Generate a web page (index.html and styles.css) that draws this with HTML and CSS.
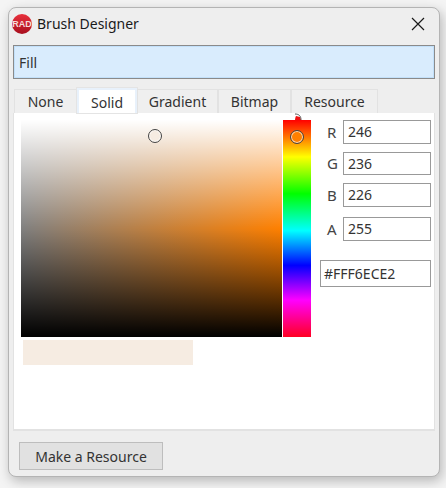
FILE: index.html
```html
<!DOCTYPE html>
<html lang="en">
<head>
    <meta charset="UTF-8">
    <meta name="viewport" content="width=device-width, initial-scale=1.0">
    <title>Brush Designer</title>
    <link rel="stylesheet" href="styles.css">
</head>
<body>
    <div class="window">
        <div class="titlebar">
            <div class="app-logo">RAD</div>
            <h1>Brush Designer</h1>
            <svg class="close-icon" width="14" height="14" viewBox="0 0 14 14">
                <path d="M1 1 L13 13 M13 1 L1 13" stroke="#1a1a1a" stroke-width="1.2" fill="none"/>
            </svg>
        </div>

        <div class="name-box"><span>Fill</span></div>

        <div class="tabs">
            <div class="tab">None</div>
            <div class="tab tab-active">Solid</div>
            <div class="tab">Gradient</div>
            <div class="tab">Bitmap</div>
            <div class="tab">Resource</div>
        </div>

        <div class="panel">
            <div class="picker">
                <div class="picker-left">
                    <div class="picker-colors">
                        <div class="sv-square">
                            <div class="handle handle-sv"></div>
                        </div>
                        <div class="hue-bar">
                            <svg class="hue-glitch" width="14" height="8" viewBox="0 0 14 8">
                                <path d="M2 7 C2 5 3 3 3 3 L7 4 L8 7 Z" fill="#ee1111"/>
                                <path d="M2 1 C6 1 8 3 8 7" stroke="#555" stroke-width="1" fill="none"/>
                            </svg>
                            <div class="handle handle-hue"></div>
                        </div>
                    </div>
                    <div class="preview"></div>
                </div>

                <div class="channels">
                    <div class="channel"><label>R</label><div class="field">246</div></div>
                    <div class="channel"><label>G</label><div class="field">236</div></div>
                    <div class="channel"><label>B</label><div class="field">226</div></div>
                    <div class="channel channel-alpha"><label>A</label><div class="field">255</div></div>
                    <div class="field field-hex">#FFF6ECE2</div>
                </div>
            </div>
        </div>

        <div class="footer">
            <button class="btn">Make a Resource</button>
        </div>
    </div>
</body>
</html>
```
FILE: styles.css
```css
* {
    margin: 0;
    padding: 0;
    box-sizing: border-box;
}

html, body {
    width: 446px;
    height: 488px;
    overflow: hidden;
}

body {
    font-family: 'Noto Sans', 'Open Sans', sans-serif;
    font-size: 14px;
    color: #333;
    background-color: #f4f4f4;
    padding: 7px 6px 11px 8px;
}

.window {
    width: 432px;
    height: 470px;
    background: #eeeeee;
    border: 1px solid #b4b4b4;
    border-radius: 8px;
    box-shadow: 2px 4px 12px rgba(0,0,0,0.25);
    padding: 0 4px 0 4px;
}

.titlebar {
    height: 31px;
    margin: 0 -4px 6px;
    display: flex;
    align-items: center;
    gap: 5px;
    padding: 0 14px 0 3px;
}

.app-logo {
    width: 20px;
    height: 20px;
    border-radius: 50%;
    background: linear-gradient(#e8303c, #a80f1e);
    color: #f4dada;
    font-family: 'Liberation Sans', sans-serif;
    font-size: 9px;
    font-weight: bold;
    line-height: 20px;
    text-align: center;
}

.titlebar h1 {
    flex: 1;
    font-size: 14px;
    font-weight: 400;
    color: #1a1a1a;
}

.name-box {
    height: 34px;
    border: 1px solid #8a8a8a;
    background: #d9ecfd;
    box-shadow: inset 0 0 0 1px #c2e0fa;
    display: flex;
    align-items: center;
    padding-left: 5px;
}

.tabs {
    display: grid;
    grid-template-columns: 63px 60px 81px 73px 87px;
    align-items: end;
    height: 34px;
    padding-left: 1px;
}

.tab {
    height: 24px;
    line-height: 23px;
    background: #efefef;
    border: 1px solid #e2e2e2;
    border-bottom: none;
    text-align: center;
}

.tab-active {
    height: 25px;
    line-height: 25px;
    background: #ffffff;
    border: 2px solid #e8f1fb;
    border-bottom: none;
    outline: 1px solid #e4e4e4;
}

.panel {
    height: 318px;
    background: #ffffff;
    border: 1px solid #e2e2e2;
    border-width: 0 1px 2px 1px;
    padding: 7px 5px 0 7px;
}

.picker {
    display: flex;
}

.picker-colors {
    display: flex;
    gap: 1px;
}

.sv-square {
    position: relative;
    width: 261px;
    height: 217px;
    background:
        linear-gradient(to bottom, #ffffff, rgba(255,255,255,0) 50%, rgba(0,0,0,0) 50%, #000000),
        linear-gradient(to right, #808080, #ff8000);
}

.hue-bar {
    position: relative;
    width: 28px;
    height: 217px;
    background: linear-gradient(to bottom, #ff0000, #ffff00 17%, #00ff00 34%, #00ffff 51%, #0000ff 67%, #ff00ff 83%, #ff0022);
}

.hue-glitch {
    position: absolute;
    top: -7px;
    left: 10px;
}

.handle {
    position: absolute;
    width: 14px;
    height: 14px;
    border-radius: 50%;
    border: 1.5px solid #444;
    box-shadow: inset 0 0 0 1px rgba(255,255,255,0.7);
}

.handle-sv {
    left: 127px;
    top: 9px;
    background: #f6ece2;
}

.handle-hue {
    left: 7px;
    top: 10px;
    background: #ff8000;
}

.preview {
    width: 170px;
    height: 25px;
    margin: 3px 0 0 2px;
    background: #f6ece2;
}

.channels {
    width: 120px;
    padding-left: 9px;
    display: flex;
    flex-direction: column;
}

.channel {
    display: flex;
    align-items: center;
    height: 23.5px;
    margin-bottom: 8px;
}

.channel-alpha {
    margin-top: 2.5px;
}

.channel label {
    width: 23px;
    padding-left: 7px;
    font-size: 15px;
    color: #444;
}

.field {
    width: 88px;
    height: 23.5px;
    line-height: 21px;
    padding-left: 4px;
    background: #ffffff;
    border: 1px solid #999;
    font-size: 14px;
}

.field-hex {
    width: 111px;
    height: 27px;
    line-height: 25px;
    margin-top: 11.5px;
    padding-left: 3px;
}

.footer {
    padding: 11px 0 0 6px;
}

.btn {
    width: 144px;
    height: 28px;
    background: #e1e1e1;
    border: 1px solid #bdbdbd;
    color: #333;
    font-family: inherit;
    font-size: 14px;
}
```
